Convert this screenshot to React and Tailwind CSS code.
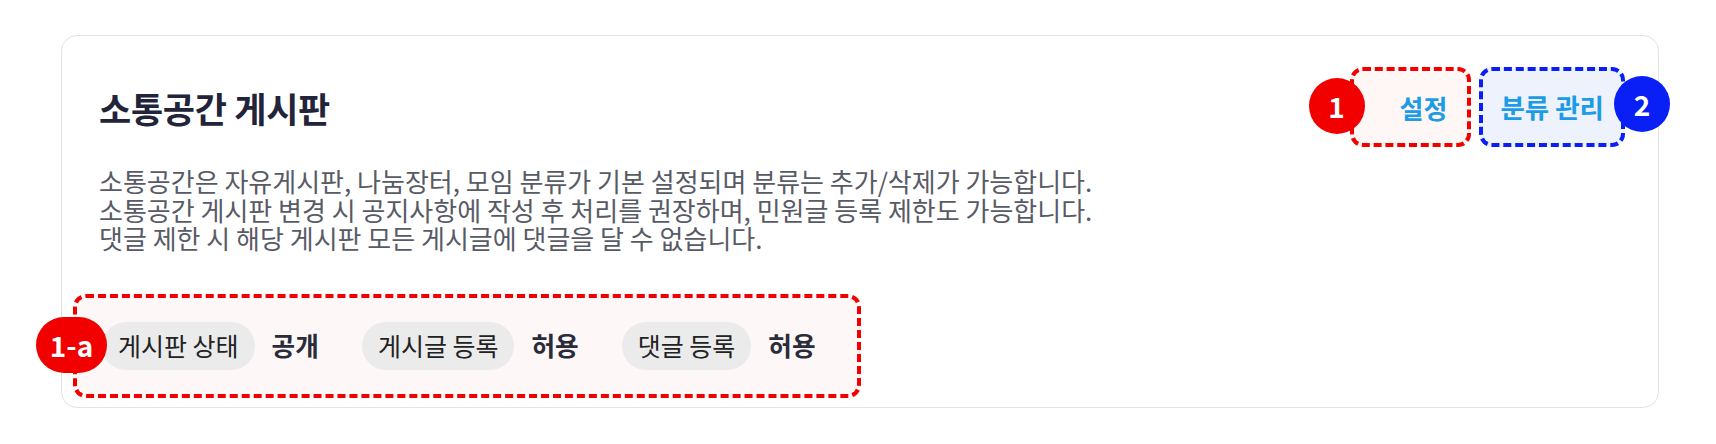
export default function App() {
  const items = [
    { label: '게시판 상태', value: '공개' },
    { label: '게시글 등록', value: '허용' },
    { label: '댓글 등록', value: '허용' },
  ];
  return (
    <div className="min-h-screen bg-white pl-[61px] pt-[35px] font-['Noto_Sans_CJK_KR',sans-serif]">
      <div className="isolate w-[1598px] h-[373px] rounded-[16px] border border-[#e3e3e3] bg-white pl-[37px] pr-[33px] pt-[31px]">
        <div className="flex items-center justify-between h-[80px]">
          <h1 className="text-[35px] font-bold leading-none text-[#22243a] tracking-[-0.3px]">소통공간 게시판</h1>
          <div className="flex gap-[8px]">
            <div className="relative flex h-[80px] items-center rounded-[13px] border-[4px] border-dashed border-[#f20000] bg-[#fff6f6] pl-[46px] pr-[20px]">
              <span className="text-[26px] font-bold text-[#1d9be6]">설정</span>
              <span className="absolute -left-[45px] top-[7px] flex h-[56px] w-[56px] items-center justify-center rounded-full bg-[#f20000] text-[28px] font-bold text-white">1</span>
            </div>
            <div className="relative flex h-[80px] items-center rounded-[13px] border-[4px] border-dashed border-[#0a1ff5] bg-[#eef2fd] px-[17px]">
              <span className="text-[26.5px] font-bold text-[#1d9be6]">분류 관리</span>
              <span className="absolute -right-[49px] top-[5px] flex h-[56px] w-[56px] items-center justify-center rounded-full bg-[#0a1ff5] text-[28px] font-bold text-white">2</span>
            </div>
          </div>
        </div>
        <div className="mt-[20px] text-[26px] leading-[28.5px] text-[#585b66]">
          <p>소통공간은 자유게시판, 나눔장터, 모임 분류가 기본 설정되며 분류는 추가/삭제가 가능합니다.</p>
          <p>소통공간 게시판 변경 시 공지사항에 작성 후 처리를 권장하며, 민원글 등록 제한도 가능합니다.</p>
          <p>댓글 제한 시 해당 게시판 모든 게시글에 댓글을 달 수 없습니다.</p>
        </div>
        <div className="relative -ml-[26px] mt-[41px] inline-flex items-center rounded-[13px] border-[4px] border-dashed border-[#f20000] bg-[#fdf7f7] py-[24px] pl-[25px] pr-[41px]">
          {items.map((it, i) => (
            <div key={i} className={`flex items-center gap-[17px] ${i > 0 ? 'ml-[43px]' : ''}`}>
              <span className="flex h-[48px] items-center rounded-full bg-[#ebebeb] px-[16px] text-[25px] text-[#222]">{it.label}</span>
              <span className="text-[25.7px] font-bold text-[#2a2c3a]">{it.value}</span>
            </div>
          ))}
          <span className="absolute -left-[41px] top-[19px] flex h-[56px] w-[71px] items-center justify-center rounded-full bg-[#f20000] text-[28px] font-bold text-white">1-a</span>
        </div>
      </div>
    </div>
  );
}
